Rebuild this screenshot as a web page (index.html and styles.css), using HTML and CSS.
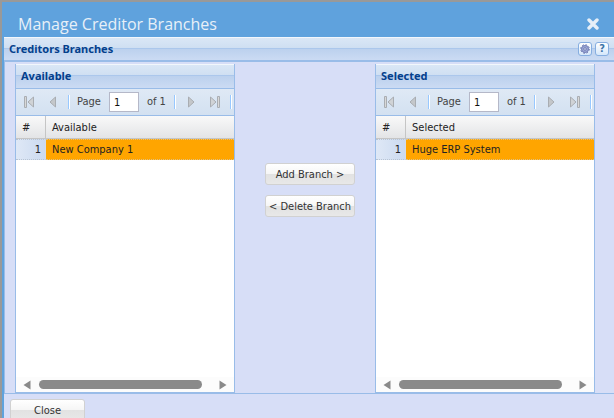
FILE: index.html
```html
<!DOCTYPE html>
<html lang="en">
<head>
    <meta charset="UTF-8">
    <meta name="viewport" content="width=device-width, initial-scale=1.0">
    <title>Manage Creditor Branches</title>
    <link rel="stylesheet" href="styles.css">
</head>
<body>
<svg class="sprites" width="0" height="0" aria-hidden="true">
    <symbol id="first" viewBox="0 0 12 12">
        <path d="M1.5 .5h2v11h-2z" fill="#d8d8d8" stroke="#a9adb2"/>
        <path d="M10.5 1v10L5 6z" fill="#d0d3d6" stroke="#a9adb2"/>
    </symbol>
    <symbol id="prev" viewBox="0 0 12 12">
        <path d="M8.5 1v10L3 6z" fill="#c4c7ca" stroke="#a9adb2"/>
    </symbol>
    <symbol id="next" viewBox="0 0 12 12">
        <path d="M3.5 1v10L9 6z" fill="#c4c7ca" stroke="#a9adb2"/>
    </symbol>
    <symbol id="last" viewBox="0 0 12 12">
        <path d="M8.5 .5h2v11h-2z" fill="#d8d8d8" stroke="#a9adb2"/>
        <path d="M1.5 1v10L7 6z" fill="#d0d3d6" stroke="#a9adb2"/>
    </symbol>
    <symbol id="left" viewBox="0 0 8 10"><path d="M7.500 .5v9L.5 5z" fill="#8a8a8a"/></symbol>
    <symbol id="right" viewBox="0 0 8 10"><path d="M.5 .5v9L7.500 5z" fill="#8a8a8a"/></symbol>
</svg>

<div class="window">
    <header class="title-bar">
        <h1>Manage Creditor Branches</h1>
        <button type="button" class="close-icon" aria-label="Close window">
            <svg width="12" height="12" viewBox="0 0 12 12"><path d="M2 2l8 8M10 2l-8 8" stroke="#e6eff8" stroke-width="3.400" stroke-linecap="round"/></svg>
        </button>
    </header>

    <div class="panel-header main-header">
        <h2>Creditors Branches</h2>
        <button type="button" class="tool" aria-label="Settings">
            <svg width="12" height="12" viewBox="0 0 12 12">
                <circle cx="6" cy="6" r="3.500" fill="#9ba7d6" stroke="#7480b8"/>
                <circle cx="6" cy="6" r="4.300" fill="none" stroke="#6672ad" stroke-dasharray="1.700 1.680"/>
                <circle cx="6" cy="6" r="1.300" fill="#d5dbf2" stroke="#5c68a0" stroke-width=".7"/>
            </svg>
        </button>
        <button type="button" class="tool help" aria-label="Help">?</button>
    </div>

    <main class="branches">
        <section class="panel">
            <div class="panel-header"><h2>Available</h2></div>
            <div class="paging">
                <button type="button" aria-label="First page"><svg><use href="#first"/></svg></button>
                <button type="button" aria-label="Previous page"><svg><use href="#prev"/></svg></button>
                <span class="separator"></span>
                <label for="availablePage">Page</label>
                <input type="text" id="availablePage" value="1">
                <span class="total">of 1</span>
                <span class="separator"></span>
                <button type="button" class="next" aria-label="Next page"><svg><use href="#next"/></svg></button>
                <button type="button" aria-label="Last page"><svg><use href="#last"/></svg></button>
                <span class="separator"></span>
            </div>
            <table>
                <thead>
                    <tr><th class="num">#</th><th>Available</th></tr>
                </thead>
                <tbody>
                    <tr><td class="num">1</td><td>New Company 1</td></tr>
                </tbody>
            </table>
            <div class="scrollbar">
                <svg><use href="#left"/></svg>
                <div class="track"><div class="thumb"></div></div>
                <svg><use href="#right"/></svg>
            </div>
        </section>

        <div class="actions">
            <button type="button" class="btn">Add Branch &gt;</button>
            <button type="button" class="btn">&lt; Delete Branch</button>
        </div>

        <section class="panel">
            <div class="panel-header"><h2>Selected</h2></div>
            <div class="paging">
                <button type="button" aria-label="First page"><svg><use href="#first"/></svg></button>
                <button type="button" aria-label="Previous page"><svg><use href="#prev"/></svg></button>
                <span class="separator"></span>
                <label for="selectedPage">Page</label>
                <input type="text" id="selectedPage" value="1">
                <span class="total">of 1</span>
                <span class="separator"></span>
                <button type="button" class="next" aria-label="Next page"><svg><use href="#next"/></svg></button>
                <button type="button" aria-label="Last page"><svg><use href="#last"/></svg></button>
                <span class="separator"></span>
            </div>
            <table>
                <thead>
                    <tr><th class="num">#</th><th>Selected</th></tr>
                </thead>
                <tbody>
                    <tr><td class="num">1</td><td>Huge ERP System</td></tr>
                </tbody>
            </table>
            <div class="scrollbar">
                <svg><use href="#left"/></svg>
                <div class="track"><div class="thumb"></div></div>
                <svg><use href="#right"/></svg>
            </div>
        </section>
    </main>

    <footer class="footer">
        <button type="button" class="btn">Close</button>
    </footer>
</div>
</body>
</html>
```

FILE: styles.css
```css
* {
    box-sizing: border-box;
}

body {
    display: flex;
    height: 100vh;
    margin: 0;
    padding: 2px 0 0 2px;
    overflow: hidden;
    background: #999999;
    font-family: "DejaVu Sans Condensed", Tahoma, sans-serif;
    font-size: 11px;
    line-height: 16px;
    color: #222222;
}

button,
input {
    font: inherit;
    color: inherit;
}

button {
    padding: 0;
    border: none;
    background: none;
    cursor: pointer;
}

svg {
    display: block;
}

.sprites {
    position: absolute;
}

.window {
    display: flex;
    flex: 1;
    flex-direction: column;
    min-width: 0;
    border-left: 2px solid #5fa2dd;
    background: #d7def7;
}

.title-bar {
    display: flex;
    align-items: center;
    justify-content: space-between;
    height: 35px;
    padding: 8px 15px 0 14px;
    background: #5fa2dd;
}

.title-bar h1 {
    margin: 0;
    font-family: "Open Sans", sans-serif;
    font-size: 16px;
    font-weight: 400;
    line-height: 24px;
    color: #e8f0f8;
}

.panel-header {
    display: flex;
    align-items: center;
    gap: 3px;
    height: 25px;
    padding: 0 5px;
    border-top: 1px solid #f2f7fc;
    border-bottom: 1px solid #99bce8;
    background: linear-gradient(#dae7f6, #cfdff2 44%, #abc7ec 45%, #abc7ec 49%, #bcd1ee 50%, #cbdbf3);
}

.panel-header h2 {
    flex: 1;
    margin: 0;
    font-family: "Noto Sans", sans-serif;
    font-size: 11px;
    font-weight: 700;
    color: #04408c;
}

.panel .panel-header {
    padding-bottom: 2px;
}

.main-header {
    border-bottom-width: 2px;
}

.tool {
    display: flex;
    align-items: center;
    justify-content: center;
    width: 14px;
    height: 14px;
    border: 1px solid #86aee0;
    border-radius: 3px;
    background: linear-gradient(#ffffff, #d5e7fa);
}

.help {
    font-weight: 700;
    color: #3e75a8;
}

.branches {
    display: grid;
    flex: 1;
    grid-template-columns: 11fr 7fr 11fr;
    padding: 2px 19px 0 10px;
    border-bottom: 1px solid #99bce8;
    border-left: 1px solid #99bce8;
}

.panel {
    display: flex;
    flex-direction: column;
    min-width: 0;
    border: 1px solid #99bce8;
    border-top: none;
    background: #ffffff;
}

.paging {
    display: flex;
    align-items: center;
    height: 27px;
    padding-left: 7px;
    overflow: hidden;
    border-bottom: 1px solid #99bce8;
    background: linear-gradient(#dfe9f5, #d3e1f1);
    color: #444444;
    white-space: nowrap;
}

.paging svg {
    width: 12px;
    height: 12px;
}

.paging button + button {
    margin-left: 12px;
}

.paging button + .separator {
    margin-left: 9px;
}

.paging .next {
    margin-left: 9px;
}

.separator {
    width: 2px;
    height: 14px;
    border-left: 1px solid #98c8ff;
    border-right: 1px solid #ffffff;
}

.paging label {
    margin: 0 8px 0 7px;
}

.total {
    margin: 0 8px;
}

.paging input {
    width: 30px;
    height: 20px;
    padding: 0 4px;
    border: 1px solid #b5b8c8;
    background: #ffffff;
    color: #111111;
}

table {
    width: 100%;
    border-collapse: separate;
    border-spacing: 0;
    table-layout: fixed;
}

th,
td {
    padding: 0 6px;
    text-align: left;
    font-weight: 400;
}

th {
    height: 23px;
    padding-top: 1px;
    border-bottom: 1px solid #c5c5c5;
    background: linear-gradient(#f9f9f9, #e3e4e6);
}

.num {
    width: 30px;
}

th.num {
    border-right: 1px solid #c5c5c5;
}

td {
    height: 21px;
    border-top: 1px dotted #e0c080;
    border-bottom: 1px dotted #e0c080;
    background: #ffa500;
}

td.num {
    padding-right: 4px;
    border-color: #b8c4d4;
    border-right: 1px solid #d4dcea;
    background: linear-gradient(to right, #dfe8f6, #cbdaf0);
    text-align: right;
}

.scrollbar {
    display: flex;
    align-items: center;
    gap: 8px;
    height: 15px;
    margin-top: auto;
    padding: 0 7px;
    background: #fcfcfc;
}

.scrollbar svg {
    width: 8px;
    height: 10px;
}

.track {
    flex: 1;
}

.thumb {
    width: 95%;
    height: 9px;
    border-radius: 5px;
    background: #8a8a8a;
}

.actions {
    display: flex;
    flex-direction: column;
    align-items: center;
    gap: 10px;
    padding: 99px 0 0 10px;
}

.btn {
    height: 22px;
    padding-top: 2px;
    border: 1px solid #d1d1d1;
    border-radius: 3px;
    background: linear-gradient(#ffffff, #f6f6f6 48%, #e2e2e2 52%, #e8e8e8);
    color: #333333;
    white-space: nowrap;
}

.actions .btn {
    width: 90px;
}

.footer {
    height: 24px;
    padding: 5px 6px 0;
}

.footer .btn {
    width: 75px;
}
```
